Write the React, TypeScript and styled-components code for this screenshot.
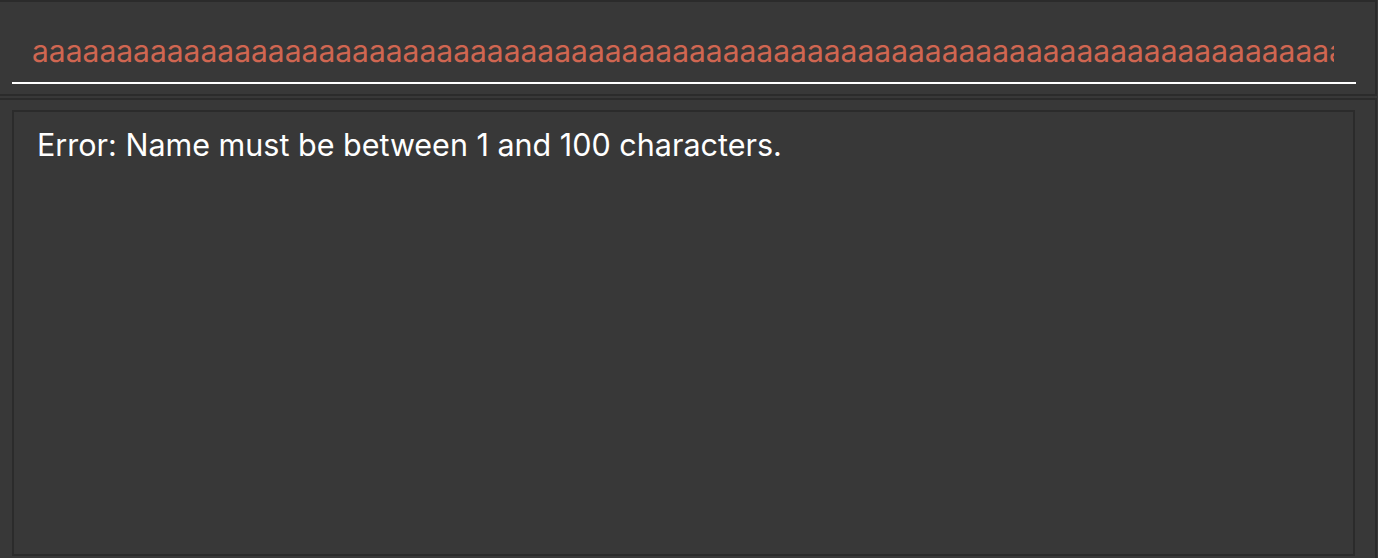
import React from "react";
import styled, { createGlobalStyle } from "styled-components";

const Global = createGlobalStyle`
  html, body { margin: 0; padding: 0; background: #383838; }
  body { width: 1378px; height: 558px; overflow: hidden; font-family: Inter, "Liberation Sans", sans-serif; }
  * { box-sizing: border-box; }
`;

const Window = styled.div`
  width: 1378px;
  height: 558px;
  display: flex;
  flex-direction: column;
  gap: 2px;
  background: #383838;
  overflow: hidden;
`;

const CommandPanel = styled.div`
  height: 96px;
  border-top: 2px solid #2b2b2b;
  border-right: 2px solid #2b2b2b;
  border-bottom: 2px solid #2b2b2b;
  margin-right: 1px;
  padding: 0 19px 0 12px;
  display: flex;
  align-items: flex-start;
`;

const CommandInput = styled.div<{ $error?: boolean }>`
  width: 100%;
  height: 82px;
  border-bottom: 2px solid #ffffff;
  padding: 18px 22px 0 20px;
  display: flex;
  align-items: center;
  overflow: hidden;
  white-space: nowrap;
  font-family: Inter, "Liberation Sans", sans-serif;
  font-size: 30px;
  color: ${(p) => (p.$error ? "#d06651" : "#ffffff")};
`;

const InputText = styled.span`
  display: block;
  overflow: hidden;
  width: 100%;
`;

const ResultPanel = styled.div`
  flex: 1;
  border-top: 2px solid #2b2b2b;
  border-right: 2px solid #2b2b2b;
  margin-right: 1px;
  padding: 10px 20px 2px 12px;
  display: flex;
`;

const ResultBox = styled.div`
  flex: 1;
  border: 2px solid #2b2b2b;
  padding: 14px 23px;
  color: #ffffff;
  font-family: Inter, "Liberation Sans", sans-serif;
  font-size: 30.5px;
  letter-spacing: 0px;
`;

export default function App() {
  return (
    <>
      <Global />
      <Window>
        <CommandPanel>
          <CommandInput $error>
            <InputText>{"a".repeat(81)}</InputText>
          </CommandInput>
        </CommandPanel>
        <ResultPanel>
          <ResultBox>Error: Name must be between 1 and 100 characters.</ResultBox>
        </ResultPanel>
      </Window>
    </>
  );
}
